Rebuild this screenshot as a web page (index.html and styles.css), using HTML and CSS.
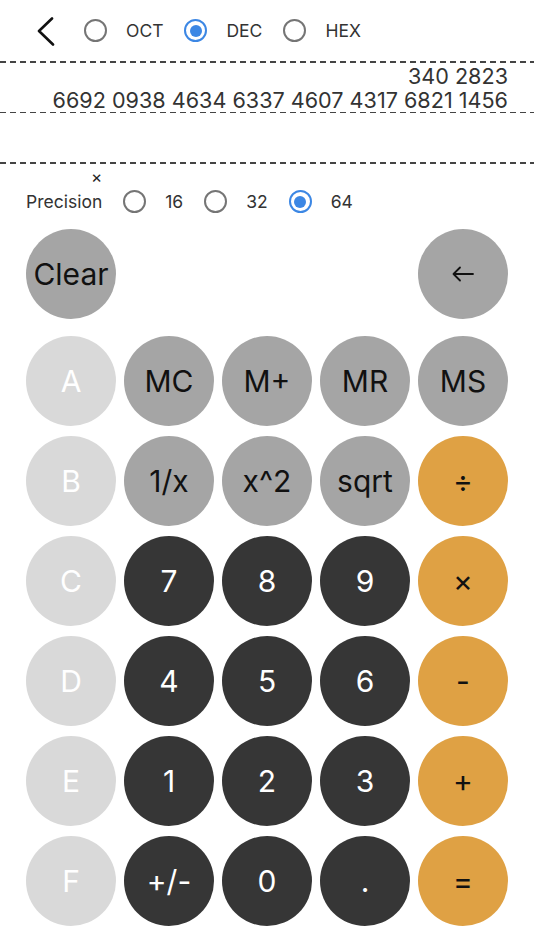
FILE: index.html
```html
<!DOCTYPE html>
<html>
<head>
<meta charset="utf-8">
<link rel="stylesheet" href="styles.css">
</head>
<body>
<div class="app">
  <header class="topbar">
    <span class="back">
      <svg width="18" height="29" viewBox="0 0 18 29"><polyline points="15,1.5 2,14 16,27.5" fill="none" stroke="#111" stroke-width="2.6" stroke-linecap="round" stroke-linejoin="round"/></svg>
    </span>
    <div class="radios">
      <span class="opt"><span class="radio"></span><span class="lbl">OCT</span></span>
      <span class="opt"><span class="radio on"></span><span class="lbl">DEC</span></span>
      <span class="opt"><span class="radio"></span><span class="lbl">HEX</span></span>
    </div>
  </header>
  <div class="dash"></div>
  <div class="display">
    <div class="line">340 2823</div>
    <div class="line">6692 0938 4634 6337 4607 4317 6821 1456</div>
  </div>
  <div class="dash"></div>
  <div class="input"></div>
  <div class="dash"></div>
  <div class="close">×</div>
  <div class="precision">
    <span class="plabel">Precision</span>
    <div class="radios">
      <span class="opt"><span class="radio"></span><span class="lbl">16</span></span>
      <span class="opt"><span class="radio"></span><span class="lbl">32</span></span>
      <span class="opt"><span class="radio on"></span><span class="lbl">64</span></span>
    </div>
  </div>
  <div class="keypad">
    <div class="toprow">
      <button class="key gray">Clear</button>
      <button class="key gray">
        <svg width="24" height="16" viewBox="0 0 24 16"><path d="M22 8H2.5M9 1.5L2.5 8L9 14.5" fill="none" stroke="#111" stroke-width="1.8" stroke-linecap="round" stroke-linejoin="round"/></svg>
      </button>
    </div>
    <div class="keys">
      <button class="key light">A</button>
      <button class="key gray">MC</button>
      <button class="key gray">M+</button>
      <button class="key gray">MR</button>
      <button class="key gray">MS</button>

      <button class="key light">B</button>
      <button class="key gray">1/x</button>
      <button class="key gray">x^2</button>
      <button class="key gray">sqrt</button>
      <button class="key orange">÷</button>

      <button class="key light">C</button>
      <button class="key dark">7</button>
      <button class="key dark">8</button>
      <button class="key dark">9</button>
      <button class="key orange">×</button>

      <button class="key light">D</button>
      <button class="key dark">4</button>
      <button class="key dark">5</button>
      <button class="key dark">6</button>
      <button class="key orange">-</button>

      <button class="key light">E</button>
      <button class="key dark">1</button>
      <button class="key dark">2</button>
      <button class="key dark">3</button>
      <button class="key orange">+</button>

      <button class="key light">F</button>
      <button class="key dark">+/-</button>
      <button class="key dark">0</button>
      <button class="key dark">.</button>
      <button class="key orange">=</button>
    </div>
  </div>
</div>
</body>
</html>
```
FILE: styles.css
```css
* { box-sizing: border-box; }
html, body { margin: 0; padding: 0; background: #fff; }
body {
  font-family: Inter, "Noto Sans", "Liberation Sans", sans-serif;
  color: #333;
}
.app { width: 534px; }

.topbar {
  height: 61px;
  display: flex;
  align-items: center;
  padding-left: 37px;
}
.back { display: flex; margin-right: 29px; margin-top: 1px; }

.radios { display: flex; align-items: center; gap: 21px; }
.opt { display: flex; align-items: center; gap: 19px; }
.lbl { font-size: 17.5px; color: #333; line-height: 20px; }

.radio {
  width: 23px;
  height: 23px;
  border-radius: 50%;
  border: 2.5px solid #757575;
  display: flex;
  align-items: center;
  justify-content: center;
}
.radio.on { border-color: #3c87e4; }
.radio.on::after {
  content: "";
  width: 12px;
  height: 12px;
  border-radius: 50%;
  background: #3c87e4;
}

.dash {
  height: 1.5px;
  background: repeating-linear-gradient(to right, #444 0, #444 6px, transparent 6px, transparent 10px);
}

.display {
  height: 49px;
  padding: 1px 26px 0 0;
  text-align: right;
}
.line {
  font-size: 21.6px;
  line-height: 24px;
  color: #333;
  white-space: nowrap;
}

.input { height: 49px; }

.close {
  padding-left: 91px;
  margin-top: 3px;
  font-size: 17px;
  line-height: 20px;
  color: #222;
}

.precision {
  display: flex;
  align-items: center;
  height: 26px;
  margin-top: 2px;
  padding-left: 26px;
  gap: 21px;
}
.plabel { font-size: 17.5px; color: #333; }

.keypad {
  margin-top: 14px;
  padding: 0 26px;
}
.toprow {
  display: flex;
  justify-content: space-between;
  margin-bottom: 17px;
}
.keys {
  display: grid;
  grid-template-columns: repeat(5, 90px);
  grid-auto-rows: 90px;
  column-gap: 8px;
  row-gap: 10px;
}
.key {
  width: 90px;
  height: 90px;
  border: none;
  border-radius: 50%;
  padding: 0;
  font-family: Inter, "Noto Sans", "Liberation Sans", sans-serif;
  font-size: 30px;
  display: flex;
  align-items: center;
  justify-content: center;
}
.gray { background: #a5a5a5; color: #111; }
.light { background: #d9d9d9; color: #fff; }
.dark { background: #363636; color: #fff; }
.orange { background: #dfa144; color: #111; }
```
